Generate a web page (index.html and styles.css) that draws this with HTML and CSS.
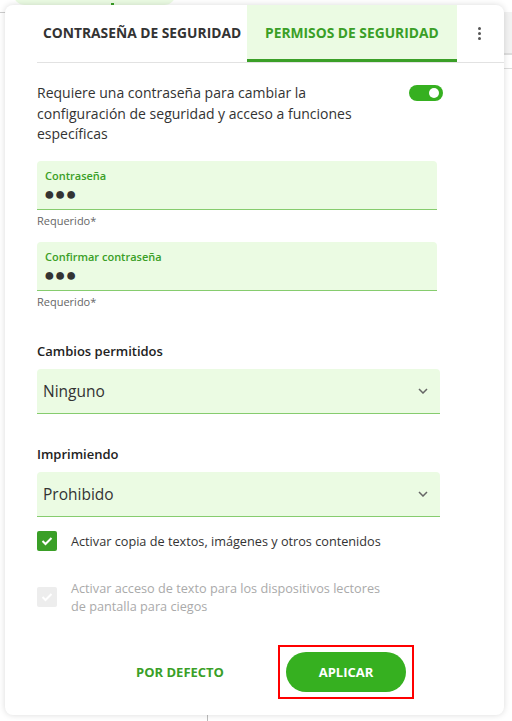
FILE: index.html
```html
<!DOCTYPE html>
<html lang="es">
<head>
    <meta charset="UTF-8">
    <title>Permisos de seguridad</title>
    <link rel="stylesheet" href="styles.css">
</head>
<body>
    <!-- fondo de la página detrás del diálogo -->
    <div class="backdrop">
        <div class="bg-pill"><span class="bg-dot"></span></div>
        <div class="bg-line-left"></div>
        <div class="bg-band-right"></div>
        <div class="bg-line-right"></div>
        <div class="bg-divider"></div>
    </div>

    <div class="dialog">
        <div class="tabs">
            <div class="tab">CONTRASEÑA DE SEGURIDAD</div>
            <div class="tab active">PERMISOS DE SEGURIDAD</div>
            <div class="tab-menu">
                <span></span><span></span><span></span>
            </div>
        </div>

        <div class="content">
            <div class="intro">
                <p>Requiere una contraseña para cambiar la configuración de seguridad y acceso a funciones específicas</p>
                <div class="toggle"><span class="knob"></span></div>
            </div>

            <div class="field">
                <label>Contraseña</label>
                <div class="dots">●●●</div>
            </div>
            <div class="hint">Requerido*</div>

            <div class="field second">
                <label>Confirmar contraseña</label>
                <div class="dots">●●●</div>
            </div>
            <div class="hint">Requerido*</div>

            <div class="group-title">Cambios permitidos</div>
            <div class="select">
                <span>Ninguno</span>
                <svg width="10" height="6" viewBox="0 0 10 6"><path d="M1 1l4 4 4-4" fill="none" stroke="#666" stroke-width="1.5"/></svg>
            </div>

            <div class="group-title next">Imprimiendo</div>
            <div class="select">
                <span>Prohibido</span>
                <svg width="10" height="6" viewBox="0 0 10 6"><path d="M1 1l4 4 4-4" fill="none" stroke="#666" stroke-width="1.5"/></svg>
            </div>

            <div class="check">
                <span class="box on">
                    <svg width="12" height="10" viewBox="0 0 12 10"><path d="M1.5 5l3 3 6-6" fill="none" stroke="#fff" stroke-width="2"/></svg>
                </span>
                <span class="check-text">Activar copia de textos, imágenes y otros contenidos</span>
            </div>
            <div class="check disabled">
                <span class="box">
                    <svg width="12" height="10" viewBox="0 0 12 10"><path d="M1.5 5l3 3 6-6" fill="none" stroke="#fff" stroke-width="2"/></svg>
                </span>
                <span class="check-text">Activar acceso de texto para los dispositivos lectores de pantalla para ciegos</span>
            </div>
        </div>

        <div class="actions">
            <button class="btn-text">POR DEFECTO</button>
            <div class="highlight">
                <button class="btn-main">APLICAR</button>
            </div>
        </div>
    </div>
</body>
</html>
```

FILE: styles.css
```css
/* diálogo de permisos */
body {
    margin: 0;
    padding: 5px;
    background: #fff;
    font-family: 'Open Sans', 'Noto Sans', sans-serif;
    color: #333;
}
.backdrop {
    position: absolute;
    left: 0;
    top: 0;
    width: 512px;
    height: 721px;
    overflow: hidden;
}
.bg-pill {
    position: absolute;
    left: 13px;
    top: -20px;
    width: 163px;
    height: 25px;
    border-radius: 12px;
    background: #ebfbe3;
}
.bg-dot {
    position: absolute;
    left: 98px;
    bottom: 0;
    width: 3px;
    height: 2px;
    background: #3a9f27;
}
.bg-line-left {
    position: absolute;
    left: 0;
    top: 12px;
    width: 6px;
    height: 1px;
    background: #ccc;
}
.bg-band-right {
    position: absolute;
    left: 504px;
    top: 12px;
    width: 8px;
    height: 41px;
    background: #f2f2f2;
    border-bottom: 2px solid #ddd;
}
.bg-line-right {
    position: absolute;
    left: 504px;
    top: 68px;
    width: 8px;
    height: 1px;
    background: #ddd;
}
.bg-divider {
    position: absolute;
    left: 207px;
    top: 712px;
    width: 1px;
    height: 9px;
    background: #bbb;
}

.dialog {
    position: relative;
    width: 499px;
    height: 710px;
    background: #fff;
    border-radius: 8px;
    box-shadow: 0 0 6px rgba(0,0,0,0.15);
    display: flex;
    flex-direction: column;
}

.tabs {
    display: flex;
    margin-left: 32px;
    height: 57px;
    border-bottom: 1px solid #e2e2e2;
}
.tab {
    display: flex;
    align-items: center;
    padding: 0 6px;
    font-size: 13.8px;
    font-weight: 700;
    color: #333;
    white-space: nowrap;
    border-bottom: 3px solid transparent;
    width: 198px;
}
.tab.active {
    background: #ebfbe3;
    color: #3a9f27;
    border-bottom-color: #3a9f27;
    padding: 0 18px;
    width: 174px;
}
.tab-menu {
    flex: 1;
    display: flex;
    flex-direction: column;
    align-items: center;
    justify-content: center;
    gap: 2px;
    padding-right: 2px;
}
.tab-menu span {
    width: 3px;
    height: 3px;
    border-radius: 50%;
    background: #555;
}

.content {
    padding: 0 32px;
}
.intro {
    display: flex;
    justify-content: space-between;
    padding-top: 20px;
    width: 406px;
}
.intro p {
    margin: 0;
    width: 340px;
    font-size: 14px;
    line-height: 20.5px;
}
.toggle {
    width: 34px;
    height: 16px;
    border-radius: 8px;
    background: #36b020;
    position: relative;
    margin-top: 2px;
}
.knob {
    position: absolute;
    right: 4px;
    top: 3px;
    width: 10px;
    height: 10px;
    border-radius: 50%;
    background: #fff;
}

.field {
    width: 400px;
    height: 48px;
    margin-top: 16px;
    background: #ebfbe3;
    border-bottom: 1px solid #86cc6e;
    border-radius: 4px 4px 0 0;
}
.field.second {
    margin-top: 14px;
}
.field label {
    display: block;
    padding: 7px 0 0 8px;
    font-size: 11px;
    font-weight: 600;
    color: #3a9f27;
}
.dots {
    padding: 0 0 0 7px;
    font-size: 18px;
    line-height: 20px;
    color: #333;
}
.hint {
    font-size: 11px;
    color: #666;
    margin-top: 3px;
}

.group-title {
    margin-top: 33px;
    font-size: 13px;
    font-weight: 600;
    color: #222;
}
.group-title.next {
    margin-top: 31px;
}
.select {
    width: 403px;
    height: 45px;
    margin-top: 9px;
    background: #ebfbe3;
    border-bottom: 1px solid #86cc6e;
    border-radius: 4px 4px 0 0;
    display: flex;
    align-items: center;
    justify-content: space-between;
    padding: 0 12px 0 6px;
    box-sizing: border-box;
    font-size: 15.5px;
}

.check {
    display: flex;
    align-items: center;
    gap: 14px;
    margin-top: 14px;
    font-size: 12.7px;
    line-height: 18px;
}
.check + .check {
    margin-top: 28px;
}
.box {
    flex: none;
    width: 20px;
    height: 20px;
    border-radius: 2px;
    background: #ededed;
    display: flex;
    align-items: center;
    justify-content: center;
}
.box.on {
    background: #3a9f27;
}
.check-text {
    width: 320px;
}
.check.disabled .check-text {
    color: #aaa;
}

.actions {
    margin-top: auto;
    display: flex;
    align-items: center;
    padding: 0 0 16px 130px;
}
.btn-text {
    border: none;
    background: none;
    font-family: inherit;
    font-size: 13px;
    font-weight: 700;
    color: #3a9f27;
    padding: 0;
    width: 90px;
}
.highlight {
    margin-left: 53px;
    border: 2px solid #f00;
    padding: 5px 6px;
}
.btn-main {
    display: block;
    width: 120px;
    height: 40px;
    border: none;
    border-radius: 20px;
    background: #36b020;
    color: #fff;
    font-family: inherit;
    font-size: 13px;
    font-weight: 700;
}
```
